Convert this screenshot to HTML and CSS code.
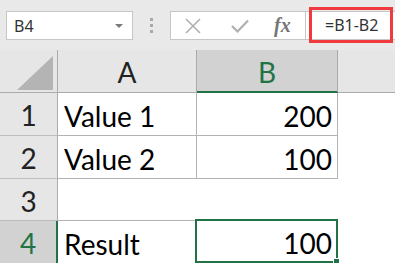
FILE: index.html
```html
<!DOCTYPE html>
<html lang="en">
<head>
  <meta charset="UTF-8">
  <title>Sheet</title>
  <link rel="stylesheet" href="styles.css">
</head>
<body>

  <div class="topbar">
    <div class="namebox">
      <span>B4</span>
      <svg class="arrow" width="8" height="4" viewBox="0 0 8 4"><path d="M0 0H8L4 4Z" fill="#7a7a7a"/></svg>
    </div>
    <div class="grip"><i></i><i></i><i></i></div>
    <div class="tools">
      <svg class="icon" width="16" height="16" viewBox="0 0 16 16"><path d="M1 1L15 15M15 1L1 15" stroke="#b0b0b0" stroke-width="1.6" fill="none"/></svg>
      <svg class="icon" width="18" height="14" viewBox="0 0 18 14"><path d="M1 7L6.5 12.5L17 1.5" stroke="#b0b0b0" stroke-width="2.2" fill="none"/></svg>
      <span class="fx">fx</span>
    </div>
    <div class="formula">=B1-B2</div>
  </div>

  <div class="sheet">
    <div class="corner"><svg width="36" height="34" viewBox="0 0 36 34"><path d="M36 0V34H0Z" fill="#b4b4b4"/></svg></div>
    <div class="colhead">A</div>
    <div class="colhead active">B</div>
    <div class="colhead rest"></div>

    <div class="rowhead">1</div>
    <div class="cell boxed">Value 1</div>
    <div class="cell boxed num">200</div>
    <div class="cell"></div>

    <div class="rowhead">2</div>
    <div class="cell boxed">Value 2</div>
    <div class="cell boxed num">100</div>
    <div class="cell"></div>

    <div class="rowhead">3</div>
    <div class="cell under"></div>
    <div class="cell"></div>
    <div class="cell"></div>

    <div class="rowhead active">4</div>
    <div class="cell">Result</div>
    <div class="cell num selected">100<span class="handle"></span></div>
    <div class="cell"></div>
  </div>

</body>
</html>
```

FILE: styles.css
```css
body {
  margin: 0;
  padding: 0;
  background: #fff;
  overflow: hidden;
}

.topbar {
  height: 50px;
  box-sizing: border-box;
  background-color: #e9e9e9;
  display: flex;
  align-items: flex-start;
  padding: 11px 0 0 6px;
  font-family: "Noto Sans", sans-serif;
}

.namebox {
  width: 127px;
  height: 29px;
  box-sizing: border-box;
  border: 1px solid #c6c6c6;
  background: #fff;
  display: flex;
  align-items: center;
  justify-content: space-between;
  padding: 0 9px 0 7px;
  font-size: 16px;
  color: #333;
}

.grip {
  width: 37px;
  height: 29px;
  display: flex;
  flex-direction: column;
  align-items: center;
  justify-content: center;
  gap: 3px;
}

.grip i {
  display: block;
  width: 3px;
  height: 3px;
  background: #a9a9a9;
}

.tools {
  width: 136px;
  height: 29px;
  box-sizing: border-box;
  border: 1px solid #c6c6c6;
  background: #fff;
  display: flex;
  align-items: center;
  padding-left: 14px;
  gap: 30px;
}

.fx {
  font-family: "Liberation Serif", serif;
  font-style: italic;
  font-weight: bold;
  font-size: 20px;
  color: #767676;
  margin-left: -5px;
}

.formula {
  flex: 1;
  height: 29px;
  box-sizing: border-box;
  border-top: 1px solid #c6c6c6;
  border-bottom: 1px solid #c6c6c6;
  background: #fff;
  position: relative;
  padding-left: 19px;
  font-size: 16px;
  line-height: 27px;
  color: #333;
}

/* red annotation box drawn over the formula bar */
.formula::after {
  content: "";
  position: absolute;
  left: 3px;
  right: 2px;
  top: -5px;
  bottom: -4px;
  border: 3px solid #ef3a3e;
}

.sheet {
  display: grid;
  grid-template-columns: 58px 139px 141px 1fr;
  grid-template-rows: 43px 43px 43px 42px 42px;
  font-family: Lato, "Liberation Sans", sans-serif;
  font-size: 28px;
}

.corner, .colhead, .rowhead {
  background-color: #e6e6e6;
  box-sizing: border-box;
  display: flex;
  align-items: center;
  justify-content: center;
  color: #222;
}

.corner {
  border-right: 1px solid #ababab;
  border-bottom: 1px solid #ababab;
  align-items: flex-end;
  justify-content: flex-end;
  padding: 0 4px 2px 0;
}

.corner svg {
  display: block;
}

.colhead {
  border-right: 1px solid #ababab;
  border-bottom: 1px solid #ababab;
  padding-top: 2px;
}

.colhead.rest {
  border-right: none;
}

.colhead.active {
  background-color: #d2d2d2;
  color: #217346;
  border-bottom: 2px solid #217346;
}

.rowhead {
  border-right: 1px solid #ababab;
  border-bottom: 1px solid #bdbdbd;
  padding-top: 2px;
}

.rowhead.active {
  background-color: #d2d2d2;
  color: #217346;
  border-right: 2px solid #217346;
  border-bottom: none;
}

.cell {
  box-sizing: border-box;
  display: flex;
  align-items: center;
  padding: 3px 5px 0 6px;
  color: #000;
}

.cell.boxed {
  border-right: 1px solid #b3b3b3;
  border-bottom: 1px solid #b3b3b3;
}

.cell.under {
  border-bottom: 1px solid #b3b3b3;
}

.cell.num {
  justify-content: flex-end;
}

.cell.selected {
  position: relative;
  border: 2px solid #217346;
  margin: -2px 0 0 -2px;
  padding-right: 4px;
}

.handle {
  position: absolute;
  right: -4px;
  bottom: -4px;
  width: 5px;
  height: 5px;
  background: #217346;
  border: 1px solid #fff;
}
```
